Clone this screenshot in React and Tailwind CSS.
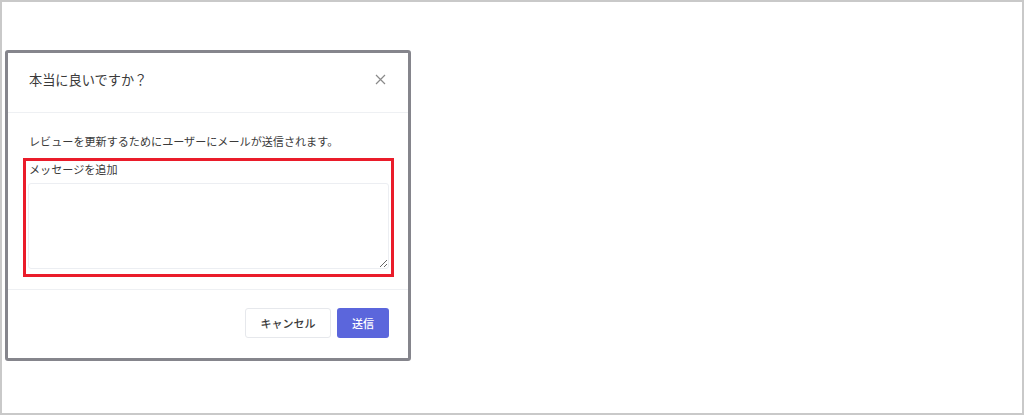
import React from "react";

const font = { fontFamily: '"Noto Sans CJK JP", "Noto Sans", sans-serif' };

const ConfirmDialog = () => {
  return (
    <div className="w-[406px] h-[311px] border-[3px] border-[#85858c] rounded-[3px] bg-white flex flex-col">
      {/* Header */}
      <div className="h-[60px] shrink-0 flex items-start justify-between pl-[21px] pr-[22px] pt-[17px] border-b border-[#eef0f3]">
        <h2 className="text-[13.2px] leading-[20px] text-[#3a3a3a]">本当に良いですか？</h2>
        <button className="mt-[4px] text-[#8a8a8a]">
          <svg width="11" height="11" viewBox="0 0 11 11" fill="none" stroke="currentColor" strokeWidth="1.2">
            <path d="M1 1L10 10M10 1L1 10" />
          </svg>
        </button>
      </div>

      {/* Body */}
      <div className="flex-1 pt-[20px] pl-[15px] pr-[14px] pb-[12px] border-b border-[#eef0f3]">
        <p className="pl-[6px] text-[11.1px] leading-[16px] text-[#3a3a3a]">
          レビューを更新するためにユーザーにメールが送信されます。
        </p>
        <div className="mt-[9px] border-[3px] border-[#ea1c2a] pl-[2px] pr-[2px] pb-[5px]">
          <label className="block pl-[1px] text-[11.1px] leading-[16px] text-[#3a3a3a]">メッセージを追加</label>
          <textarea
            className="mt-[6px] block w-full h-[86px] border border-[#eceef2] rounded-[3px] bg-white outline-none"
          />
        </div>
      </div>

      {/* Footer */}
      <div className="h-[68px] shrink-0 flex items-start justify-end gap-[6px] pt-[18px] pr-[19px]">
        <button className="w-[86px] h-[30px] rounded-[3px] border border-[#e6e8ec] bg-white text-[11px] font-medium text-[#3a3a3a]">
          キャンセル
        </button>
        <button className="w-[52px] h-[30px] rounded-[3px] bg-[#5b66dc] text-[11px] font-medium text-white">
          送信
        </button>
      </div>
    </div>
  );
};

const App = () => {
  return (
    <div style={font} className="w-[1024px] h-[415px] border-2 border-[#c9c9c9] bg-white pt-[48px] pl-[3px] overflow-hidden">
      <ConfirmDialog />
    </div>
  );
};

export default App;
